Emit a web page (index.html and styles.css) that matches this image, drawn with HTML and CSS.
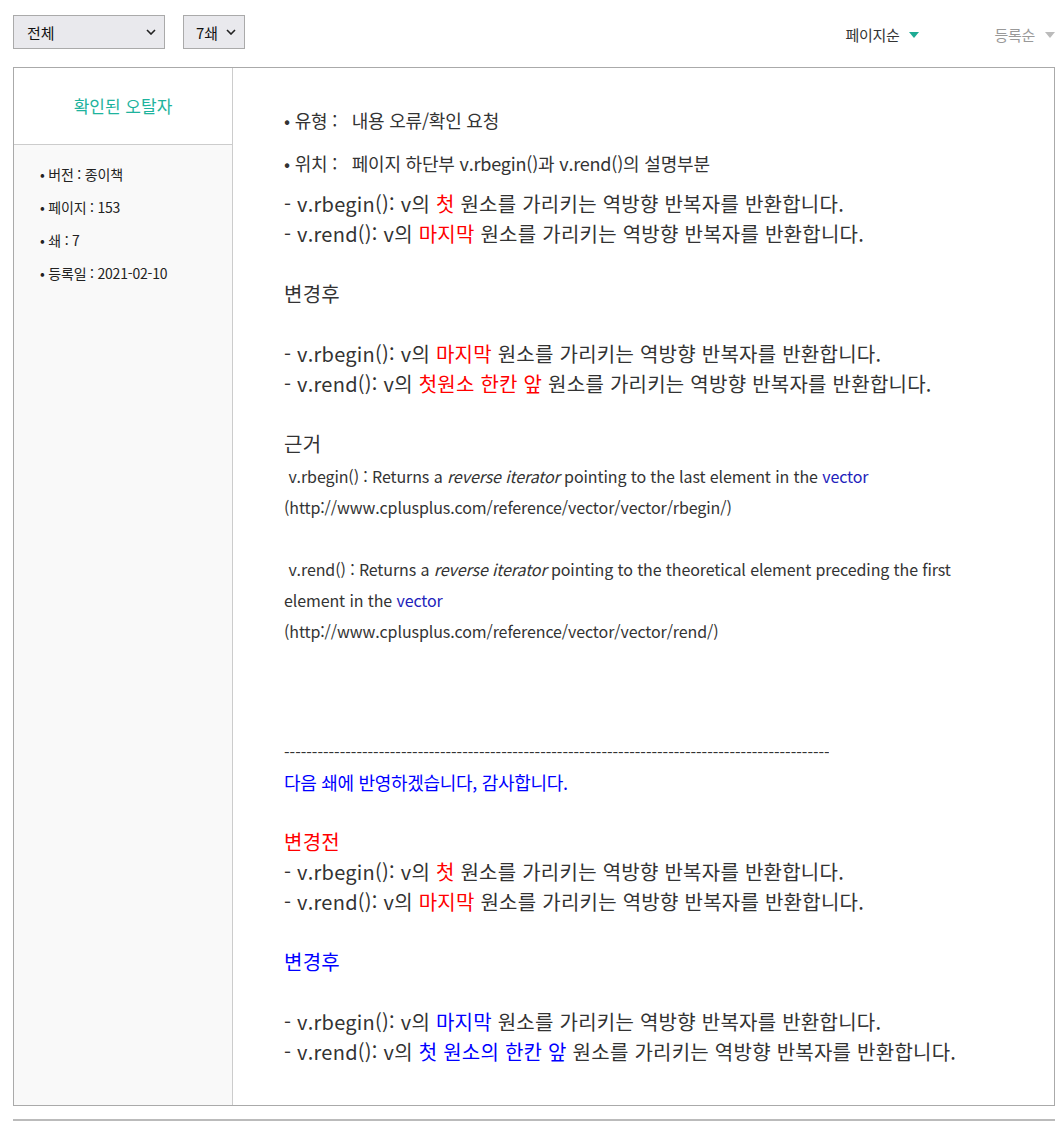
FILE: index.html
```html
<!DOCTYPE html>
<html lang="ko">
<head>
<meta charset="utf-8">
<link rel="stylesheet" href="styles.css">
</head>
<body>
<div class="toolbar">
  <div class="selects">
    <div class="select sel-wide"><span>전체</span><svg width="10" height="6" viewBox="0 0 10 6"><path d="M1 1l4 4 4-4" fill="none" stroke="#222" stroke-width="1.6"/></svg></div>
    <div class="select sel-narrow"><span>7쇄</span><svg width="10" height="6" viewBox="0 0 10 6"><path d="M1 1l4 4 4-4" fill="none" stroke="#222" stroke-width="1.6"/></svg></div>
  </div>
  <div class="sorts">
    <span class="sort active">페이지순<i class="tri"></i></span>
    <span class="sort">등록순<i class="tri"></i></span>
  </div>
</div>

<div class="panel">
  <div class="side">
    <div class="side-head">확인된 오탈자</div>
    <ul class="side-info">
      <li>버전 : 종이책</li>
      <li>페이지 : 153</li>
      <li>쇄 : 7</li>
      <li>등록일 : 2021-02-10</li>
    </ul>
  </div>
  <div class="body">
    <p class="meta">• 유형 : &nbsp;&nbsp;내용 오류/확인 요청</p>
    <p class="meta">• 위치 : &nbsp;&nbsp;페이지 하단부 v.rbegin()과 v.rend()의 설명부분</p>
    <div class="big">
      <div>- v.rbegin(): v의 <span class="red">첫</span> 원소를 가리키는 역방향 반복자를 반환합니다.</div>
      <div>- v.rend(): v의 <span class="red">마지막</span> 원소를 가리키는 역방향 반복자를 반환합니다.</div>
      <div class="blank"></div>
      <div>변경후</div>
      <div class="blank"></div>
      <div>- v.rbegin(): v의 <span class="red">마지막</span> 원소를 가리키는 역방향 반복자를 반환합니다.</div>
      <div>- v.rend(): v의 <span class="red">첫원소 한칸 앞</span> 원소를 가리키는 역방향 반복자를 반환합니다.</div>
      <div class="blank"></div>
      <div>근거</div>
    </div>
    <div class="small">
      <div>&nbsp;v.rbegin() : Returns a <em>reverse iterator</em> pointing to the last element in the <span class="link">vector</span></div>
      <div>(http://www.cplusplus.com/reference/vector/vector/rbegin/)</div>
      <div class="blank"></div>
      <div>&nbsp;v.rend() : Returns a <em>reverse iterator</em> pointing to the theoretical element preceding the first</div>
      <div>element in the <span class="link">vector</span></div>
      <div>(http://www.cplusplus.com/reference/vector/vector/rend/)</div>
    </div>
    <div class="big">
      <div class="blank"></div>
      <div class="blank"></div>
      <div class="blank"></div>
      <div class="dashes">--------------------------------------------------------------------------------------------------</div>
      <div class="thanks">다음 쇄에 반영하겠습니다, 감사합니다.</div>
      <div class="blank"></div>
      <div class="red">변경전</div>
      <div>- v.rbegin(): v의 <span class="red">첫</span> 원소를 가리키는 역방향 반복자를 반환합니다.</div>
      <div>- v.rend(): v의 <span class="red">마지막</span> 원소를 가리키는 역방향 반복자를 반환합니다.</div>
      <div class="blank"></div>
      <div class="blue">변경후</div>
      <div class="blank"></div>
      <div>- v.rbegin(): v의 <span class="blue">마지막</span> 원소를 가리키는 역방향 반복자를 반환합니다.</div>
      <div>- v.rend(): v의 <span class="blue">첫 원소의 한칸 앞</span> 원소를 가리키는 역방향 반복자를 반환합니다.</div>
    </div>
  </div>
</div>
<div class="rule"></div>
</body>
</html>
```
FILE: styles.css
```css
* { box-sizing: border-box; }
body {
  margin: 0;
  padding: 15px 8px 0 13px;
  font-family: "Noto Sans CJK KR", "Noto Sans", sans-serif;
  color: #333;
  background: #fff;
}
.toolbar {
  display: flex;
  justify-content: space-between;
  align-items: center;
  height: 34px;
}
.selects { display: flex; gap: 18px; }
.select {
  height: 34px;
  border: 1px solid #aaa;
  background: #e9e9ed;
  display: flex;
  align-items: center;
  justify-content: space-between;
  padding: 0 8px 0 13px;
  font-size: 15px;
  color: #111;
}
.sel-wide { width: 152px; }
.sel-narrow { width: 62px; padding-left: 12px; }
.sorts { display: flex; margin-top: 4px; }
.sort {
  font-size: 15px;
  color: #999;
  display: flex;
  align-items: center;
  margin-left: 75px;
  letter-spacing: -0.3px;
}
.sort.active { color: #333; }
.tri {
  display: inline-block;
  width: 0; height: 0;
  border-left: 5px solid transparent;
  border-right: 5px solid transparent;
  border-top: 6px solid #bbb;
  margin-left: 10px;
  margin-top: 2px;
}
.sort.active .tri { border-top-color: #1eab94; }
.panel {
  margin-top: 18px;
  border: 1px solid #aaa;
  display: grid;
  grid-template-columns: 219px 1fr;
}
.side {
  border-right: 1px solid #ccc;
  background: #f9f9f9;
}
.side-head {
  height: 77px;
  background: #fff;
  border-bottom: 1px solid #ccc;
  color: #1eb39d;
  font-size: 17px;
  display: flex;
  align-items: center;
  justify-content: center;
  padding-bottom: 2px;
}
.side-info {
  list-style: none;
  margin: 0;
  padding: 13px 0 0 26px;
}
.side-info li {
  font-size: 14px;
  line-height: 33px;
  letter-spacing: -0.2px;
  color: #222;
}
.side-info li::before { content: "• "; }
.body {
  padding: 37px 30px 38px 51px;
}
.meta {
  margin: 0 0 13px;
  font-size: 18px;
  line-height: 30px;
  letter-spacing: -0.2px;
  color: #333;
}
.meta + .meta { margin-bottom: 11px; }
.big {
  font-size: 20px;
  line-height: 30px;
  letter-spacing: 0.25px;
  color: #333;
}
.big .blank { height: 30px; }
.small .blank { height: 31px; }
.small {
  margin-top: 2px;
  font-size: 16px;
  line-height: 31px;
  color: #333;
  letter-spacing: -0.1px;
}
.small em { font-style: italic; }
.link { color: #2222bb; }
.red { color: #ff0000; }
.blue { color: #0000ff; }
.dashes {
  font-size: 16px;
  letter-spacing: 0;
  overflow: hidden;
  white-space: nowrap;
  width: 545px;
}
.thanks { font-size: 18px; letter-spacing: -0.3px; color: #0000ff; }
.rule {
  height: 0;
  border-top: 2px solid #bbb;
  margin-top: 13px;
  width: 1042px;
}
```
